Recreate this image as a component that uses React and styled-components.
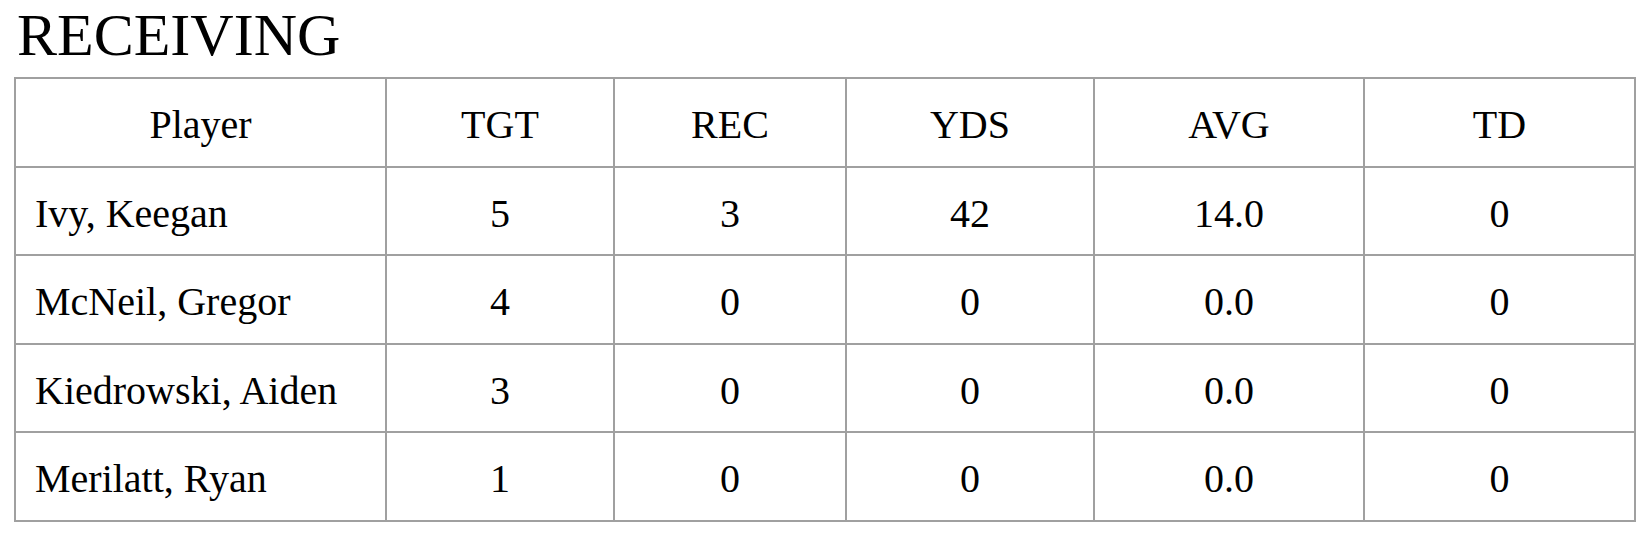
import React from "react";
import styled, { createGlobalStyle } from "styled-components";

const GlobalStyle = createGlobalStyle`
  body {
    margin: 0;
    background: #fff;
    color: #000;
    font-family: "Liberation Serif", "Times New Roman", serif;
  }
`;

const Page = styled.div`
  padding: 3px 9px 0 14px;
`;

const Title = styled.h1`
  margin: 0 0 9px 3px;
  font-size: 60px;
  line-height: 65px;
  font-weight: normal;
`;

const Table = styled.table`
  width: 1620px;
  table-layout: fixed;
  border-collapse: collapse;
  font-size: 40px;
`;

const Cell = styled.td`
  height: 88.5px;
  padding: 6px 0 0 ${(p) => (p.$left ? "19px" : "0")};
  border: 2px solid #a0a0a0;
  text-align: ${(p) => (p.$left ? "left" : "center")};
  vertical-align: middle;
  line-height: 44px;
  box-sizing: border-box;
`;

const HeadCell = styled(Cell).attrs({ as: "th" })`
  font-weight: normal;
`;

const widths = [371, 228, 232, 248, 270, 271];
const columns = ["Player", "TGT", "REC", "YDS", "AVG", "TD"];

const rows = [
  ["Ivy, Keegan", 5, 3, 42, "14.0", 0],
  ["McNeil, Gregor", 4, 0, 0, "0.0", 0],
  ["Kiedrowski, Aiden", 3, 0, 0, "0.0", 0],
  ["Merilatt, Ryan", 1, 0, 0, "0.0", 0],
];

export default function App() {
  return (
    <Page>
      <GlobalStyle />
      <Title>RECEIVING</Title>
      <Table>
        <colgroup>
          {widths.map((w, i) => (
            <col key={i} style={{ width: w }} />
          ))}
        </colgroup>
        <thead>
          <tr>
            {columns.map((c) => (
              <HeadCell key={c}>{c}</HeadCell>
            ))}
          </tr>
        </thead>
        <tbody>
          {rows.map((r) => (
            <tr key={r[0]}>
              {r.map((v, i) => (
                <Cell key={i} $left={i === 0}>
                  {v}
                </Cell>
              ))}
            </tr>
          ))}
        </tbody>
      </Table>
    </Page>
  );
}
